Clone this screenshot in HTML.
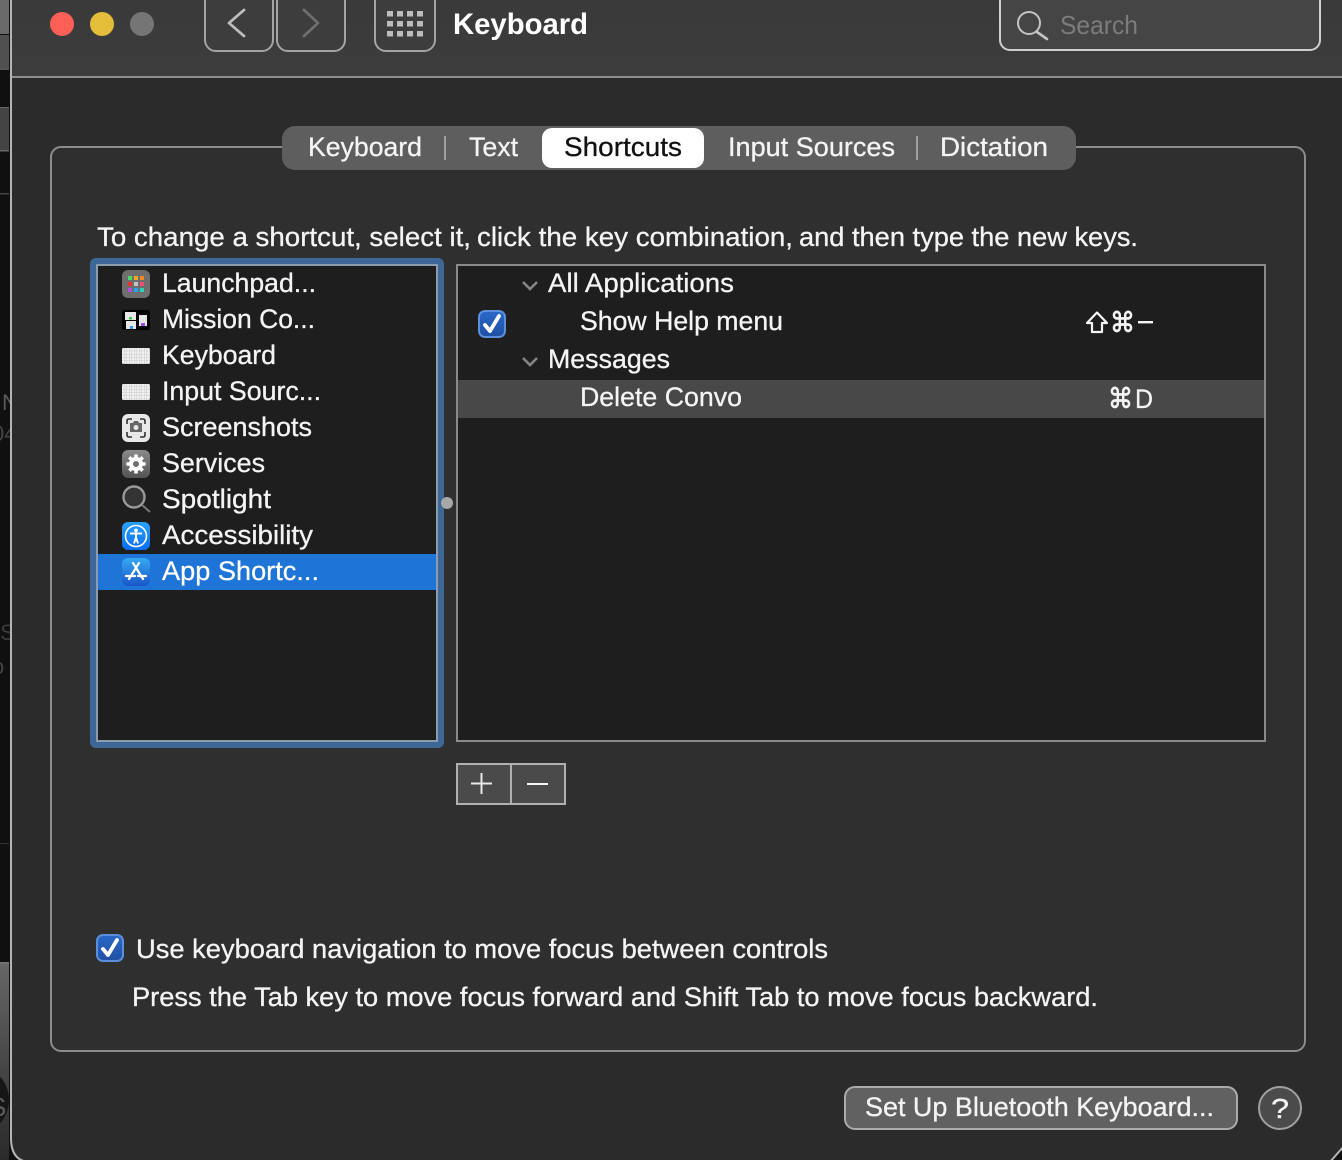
<!DOCTYPE html>
<html><head><meta charset="utf-8"><title>Keyboard</title>
<style>
html,body{margin:0;padding:0;background:#111;width:1342px;height:1160px;overflow:hidden}
svg{display:block}
text{font-family:"Liberation Sans",sans-serif;font-size:27px;fill:#f4f4f4;stroke:#f4f4f4;stroke-width:.3px}
</style></head><body>
<svg width="1342" height="1160" viewBox="0 0 1342 1160" xmlns="http://www.w3.org/2000/svg">
<defs>
<linearGradient id="side" x1="0" y1="0" x2="0" y2="1"><stop offset="0" stop-color="#666"/><stop offset="1" stop-color="#2a2a2a"/></linearGradient>
<linearGradient id="gear" x1="0" y1="0" x2="0" y2="1"><stop offset="0" stop-color="#8a8a8a"/><stop offset="1" stop-color="#535353"/></linearGradient>
<linearGradient id="acc" x1="0" y1="0" x2="0" y2="1"><stop offset="0" stop-color="#2aa0ff"/><stop offset="1" stop-color="#0a6ef0"/></linearGradient>
<linearGradient id="app" x1="0" y1="0" x2="0" y2="1"><stop offset="0" stop-color="#35aaf2"/><stop offset="1" stop-color="#1a55c8"/></linearGradient>
<linearGradient id="chk" x1="0" y1="0" x2="0" y2="1"><stop offset="0" stop-color="#2a68c8"/><stop offset="1" stop-color="#1f50a4"/></linearGradient>
<linearGradient id="tb" x1="0" y1="0" x2="0" y2="1"><stop offset="0" stop-color="#3a3a3a"/><stop offset="1" stop-color="#3c3c3c"/></linearGradient>
<pattern id="kb" width="2.500" height="3.200" patternUnits="userSpaceOnUse" x="122" y="348"><rect width="2.500" height="3.200" fill="#f2f2f2"/><rect x="2" width=".5" height="3.200" fill="#c8c8c8"/><rect y="2.700" width="2.500" height=".5" fill="#c8c8c8"/></pattern>
</defs>

<!-- background strip at far left -->
<rect width="1342" height="1160" fill="#101010"/>
<rect x="0" y="0" width="9" height="34" fill="#6a6a6a"/>
<rect x="0" y="35" width="9" height="33" fill="#505050"/>
<rect x="0" y="68" width="9" height="2" fill="#555"/>
<rect x="0" y="108" width="9" height="42" fill="#444"/>
<rect x="0" y="107" width="9" height="1" fill="#666"/><rect x="0" y="150" width="9" height="1.500" fill="#666"/>
<rect x="0" y="193" width="9" height="1.500" fill="#444"/>
<rect x="0" y="843" width="9" height="1" fill="#333"/>
<rect x="0" y="963" width="9" height="197" fill="url(#side)"/>
<rect x="0" y="962" width="9" height="1.500" fill="#777"/>
<circle cx="-26" cy="1100" r="35" fill="#161616"/>
<text x="2" y="410" style="font-size:22px;fill:#5a5a5a;stroke:none">N</text>
<text x="-8" y="441" style="font-size:22px;fill:#444;stroke:none">04</text>
<text x="-6" y="640" style="font-size:22px;fill:#3c3c3c;stroke:none">.S</text>
<text x="-8" y="674" style="font-size:22px;fill:#444;stroke:none">o</text>
<text x="-11" y="1116" style="font-size:26px;fill:#5c5c5c;stroke:none">S</text>

<!-- window -->
<path d="M11 -2H1344V1146L1330 1162H28Q11 1160 11 1138Z" fill="#2b2b2b" stroke="#b5b5b5" stroke-width="2"/>
<rect x="12" y="0" width="1330" height="76" fill="url(#tb)"/>
<rect x="12" y="76" width="1330" height="2" fill="#8f8f8f"/>

<!-- traffic lights -->
<circle cx="62" cy="24" r="12" fill="#fd5f57"/>
<circle cx="102" cy="24" r="12" fill="#e4bd3a"/>
<circle cx="142" cy="24" r="12" fill="#757575"/>

<!-- nav buttons -->
<rect x="205" y="-12" width="68" height="63" rx="11" fill="#3d3d3d" stroke="#a4a4a4" stroke-width="2"/>
<rect x="277" y="-12" width="68" height="63" rx="11" fill="#3d3d3d" stroke="#a4a4a4" stroke-width="2"/>
<path d="M244 10L229 23L244 36" fill="none" stroke="#bdbdbd" stroke-width="2.800" stroke-linecap="round" stroke-linejoin="round"/>
<path d="M304 10L318 23L304 36" fill="none" stroke="#6f6f6f" stroke-width="2.800" stroke-linecap="round" stroke-linejoin="round"/>
<rect x="375" y="-12" width="60" height="63" rx="11" fill="#3d3d3d" stroke="#a4a4a4" stroke-width="2"/>
<g fill="#bcbcbc">
<rect x="387" y="11" width="6" height="5.500"/><rect x="397" y="11" width="6" height="5.500"/><rect x="407" y="11" width="6" height="5.500"/><rect x="417" y="11" width="6" height="5.500"/>
<rect x="387" y="21" width="6" height="5.500"/><rect x="397" y="21" width="6" height="5.500"/><rect x="407" y="21" width="6" height="5.500"/><rect x="417" y="21" width="6" height="5.500"/>
<rect x="387" y="31" width="6" height="5.500"/><rect x="397" y="31" width="6" height="5.500"/><rect x="407" y="31" width="6" height="5.500"/><rect x="417" y="31" width="6" height="5.500"/>
</g>
<text x="453" y="34" style="font-size:30px;font-weight:bold;fill:#fff;stroke:none" textLength="135" lengthAdjust="spacingAndGlyphs">Keyboard</text>

<!-- search -->
<rect x="1000" y="-12" width="320" height="62" rx="10" fill="#454545" stroke="#d0d0d0" stroke-width="2"/>
<circle cx="1029" cy="23" r="11" fill="none" stroke="#c4c4c4" stroke-width="2"/>
<path d="M1037 32L1047 39" stroke="#c4c4c4" stroke-width="2.600" stroke-linecap="round"/>
<text x="1060" y="34" style="fill:#7c7c7c;stroke:none;font-size:26px" textLength="78" lengthAdjust="spacingAndGlyphs">Search</text>

<!-- panel -->
<rect x="51" y="147" width="1254" height="904" rx="10" fill="#2f2f2f" stroke="#8c8c8c" stroke-width="2"/>

<!-- tabs -->
<rect x="282" y="126" width="794" height="44" rx="13" fill="#5e5e5e"/>
<rect x="542" y="128" width="162" height="40" rx="10" fill="#fff"/>
<rect x="444" y="136" width="2" height="24" fill="#a0a0a0"/>
<rect x="916" y="136" width="2" height="24" fill="#a0a0a0"/>
<text x="308" y="156" textLength="114" lengthAdjust="spacingAndGlyphs">Keyboard</text>
<text x="469" y="156" textLength="49" lengthAdjust="spacingAndGlyphs">Text</text>
<text x="564" y="156" style="fill:#111;stroke:#111" textLength="118" lengthAdjust="spacingAndGlyphs">Shortcuts</text>
<text x="728" y="156" textLength="167" lengthAdjust="spacingAndGlyphs">Input Sources</text>
<text x="940" y="156" textLength="108" lengthAdjust="spacingAndGlyphs">Dictation</text>

<text x="97" y="246" textLength="374" lengthAdjust="spacingAndGlyphs">To change a shortcut, select it,</text>
<text x="477" y="246" textLength="316" lengthAdjust="spacingAndGlyphs">click the key combination,</text>
<text x="799" y="246" textLength="339" lengthAdjust="spacingAndGlyphs">and then type the new keys.</text>

<!-- sidebar list -->
<rect x="90" y="258" width="354" height="490" rx="6" fill="#3c6796"/>
<rect x="97" y="265" width="340" height="476" fill="#1e1e1e" stroke="#8f9cae" stroke-width="2"/>
<rect x="98" y="554" width="338" height="36" fill="#1f74d8"/>

<!-- launchpad icon -->
<rect x="122" y="270" width="28" height="28" rx="6" fill="#6e6e6e"/>
<rect x="128" y="276" width="4" height="4" fill="#4cd964"/><rect x="134" y="276" width="4" height="4" fill="#f5a623"/><rect x="140" y="276" width="4" height="4" fill="#ef8a24"/>
<rect x="128" y="282" width="4" height="4" fill="#e8342b"/><rect x="134" y="282" width="4" height="4" fill="#c4c4c4"/><rect x="140" y="282" width="4" height="4" fill="#f0506e"/>
<rect x="128" y="288" width="4" height="4" fill="#b050e0"/><rect x="134" y="288" width="4" height="4" fill="#1ea7f0"/><rect x="140" y="288" width="4" height="4" fill="#2fd1b5"/>
<!-- mission control icon -->
<rect x="122" y="310" width="28" height="20" rx="3" fill="#000"/>
<rect x="125" y="312" width="11" height="8" fill="#e6e6e6"/><rect x="129" y="317" width="3" height="2.500" fill="#3fc74f"/>
<rect x="126" y="321" width="10" height="8" fill="#e6e6e6"/><rect x="130" y="326" width="3" height="3" fill="#2a9df0"/>
<rect x="139" y="315" width="8" height="11" fill="#e6e6e6"/><rect x="141" y="323" width="4" height="3" fill="#a050e0"/>
<!-- keyboard icons -->
<rect x="122" y="348" width="28" height="16" rx="1.500" fill="url(#kb)"/>
<rect x="122" y="384" width="28" height="16" rx="1.500" fill="url(#kb)"/>
<!-- screenshots icon -->
<rect x="122" y="414" width="28" height="28" rx="6" fill="#e8e8e8"/>
<path d="M127 424v-3q0-2 2-2h3M140 419h3q2 0 2 2v3M145 432v3q0 2-2 2h-3M132 437h-3q-2 0-2-2v-3" fill="none" stroke="#333" stroke-width="1.600"/>
<path d="M130 423h3l1-2h4l1 2h3v9h-12z" fill="#666"/><circle cx="136" cy="427.500" r="2.500" fill="#e8e8e8"/>
<!-- services icon -->
<rect x="122" y="450" width="28" height="28" rx="6" fill="url(#gear)"/>
<path d="M136 454.500v19M126.500 464h19M129.300 457.300l13.400 13.400M142.700 457.300l-13.400 13.400" stroke="#fff" stroke-width="3.600"/>
<circle cx="136" cy="464" r="7" fill="#fff"/>
<circle cx="136" cy="464" r="3" fill="#6f6f6f"/>
<!-- spotlight icon -->
<circle cx="134" cy="497" r="10.500" fill="#333" stroke="#9a9a9a" stroke-width="2.400"/>
<path d="M142 505L150 512" stroke="#777" stroke-width="2"/>
<!-- accessibility icon -->
<rect x="122" y="522" width="28" height="28" rx="6" fill="url(#acc)"/>
<circle cx="136" cy="536" r="10.500" fill="none" stroke="#fff" stroke-width="1.600"/>
<circle cx="136" cy="530.500" r="1.900" fill="#fff"/>
<path d="M130 533.500h12M136 533.500v5" fill="none" stroke="#fff" stroke-width="1.900"/>
<path d="M135.800 538l-1.800 5.500M136.200 538l1.800 5.500" fill="none" stroke="#fff" stroke-width="1.900"/>
<!-- app store icon -->
<rect x="122" y="558" width="28" height="28" rx="6" fill="url(#app)"/>
<path d="M133 563l10 16M139 563l-10 16M126 576h9M138 576h8" fill="none" stroke="#fff" stroke-width="2.200" stroke-linecap="round"/>

<text x="162" y="292" textLength="154" lengthAdjust="spacingAndGlyphs">Launchpad...</text>
<text x="162" y="328" textLength="153" lengthAdjust="spacingAndGlyphs">Mission Co...</text>
<text x="162" y="364" textLength="114" lengthAdjust="spacingAndGlyphs">Keyboard</text>
<text x="162" y="400" textLength="159" lengthAdjust="spacingAndGlyphs">Input Sourc...</text>
<text x="162" y="436" textLength="150" lengthAdjust="spacingAndGlyphs">Screenshots</text>
<text x="162" y="472" textLength="103" lengthAdjust="spacingAndGlyphs">Services</text>
<text x="162" y="508" textLength="109" lengthAdjust="spacingAndGlyphs">Spotlight</text>
<text x="162" y="544" textLength="151" lengthAdjust="spacingAndGlyphs">Accessibility</text>
<text x="162" y="580" textLength="157" lengthAdjust="spacingAndGlyphs" style="fill:#fff">App Shortc...</text>

<circle cx="447" cy="503" r="6" fill="#a8a8a8"/>

<!-- right list -->
<rect x="457" y="265" width="808" height="476" fill="#1e1e1e" stroke="#8a8a8a" stroke-width="2"/>
<rect x="458" y="380" width="806" height="38" fill="#484848"/>
<path d="M523 282L530 289L537 282" fill="none" stroke="#858585" stroke-width="2.600"/>
<path d="M523 358L530 365L537 358" fill="none" stroke="#858585" stroke-width="2.600"/>
<text x="548" y="292" textLength="186" lengthAdjust="spacingAndGlyphs">All Applications</text>
<text x="580" y="330" textLength="203" lengthAdjust="spacingAndGlyphs">Show Help menu</text>
<text x="548" y="368" textLength="122" lengthAdjust="spacingAndGlyphs">Messages</text>
<text x="580" y="406" textLength="162" lengthAdjust="spacingAndGlyphs">Delete Convo</text>

<rect x="479" y="311" width="26" height="26" rx="6" fill="url(#chk)" stroke="#5b8fdc" stroke-width="2"/>
<path d="M485 325L490 331L499 316" fill="none" stroke="#fff" stroke-width="3.800" stroke-linecap="round" stroke-linejoin="round"/>

<!-- shortcut glyphs -->
<path d="M1097 312.500L1107 323H1102V332H1092V323H1087Z" fill="none" stroke="#f4f4f4" stroke-width="2.200" stroke-linejoin="round"/>
<text x="1110" y="332" style="font-family:'DejaVu Sans',sans-serif;font-size:28px;stroke-width:.7px" textLength="25" lengthAdjust="spacingAndGlyphs">⌘</text>
<rect x="1138" y="321" width="15" height="2.400" fill="#f4f4f4"/>
<text x="1108" y="408" style="font-family:'DejaVu Sans',sans-serif;font-size:28px;stroke-width:.7px" textLength="25" lengthAdjust="spacingAndGlyphs">⌘</text>
<text x="1135" y="408" textLength="18" lengthAdjust="spacingAndGlyphs">D</text>

<!-- plus minus -->
<rect x="457" y="764" width="108" height="40" fill="#4a4a4a" stroke="#b0b0b0" stroke-width="2"/>
<rect x="510" y="764" width="2" height="40" fill="#b0b0b0"/>
<path d="M471 783.500H492M481.500 773V794" stroke="#e8e8e8" stroke-width="2"/>
<rect x="527" y="783" width="21" height="2" fill="#f4f4f4"/>

<!-- bottom check -->
<rect x="97" y="935" width="26" height="26" rx="6" fill="url(#chk)" stroke="#5b8fdc" stroke-width="2"/>
<path d="M103 949L108 955L117 940" fill="none" stroke="#fff" stroke-width="3.800" stroke-linecap="round" stroke-linejoin="round"/>
<text x="136" y="958" textLength="692" lengthAdjust="spacingAndGlyphs">Use keyboard navigation to move focus between controls</text>
<text x="132" y="1006" textLength="966" lengthAdjust="spacingAndGlyphs">Press the Tab key to move focus forward and Shift Tab to move focus backward.</text>

<!-- bottom buttons -->
<rect x="845" y="1087" width="392" height="42" rx="10" fill="#616161" stroke="#ababab" stroke-width="2"/>
<text x="865" y="1116" textLength="349" lengthAdjust="spacingAndGlyphs">Set Up Bluetooth Keyboard...</text>
<circle cx="1280" cy="1108" r="21" fill="#4b4b4b" stroke="#a0a0a0" stroke-width="2"/>
<text x="1271" y="1118" style="font-size:28px" textLength="18" lengthAdjust="spacingAndGlyphs">?</text>
</svg>
</body></html>
